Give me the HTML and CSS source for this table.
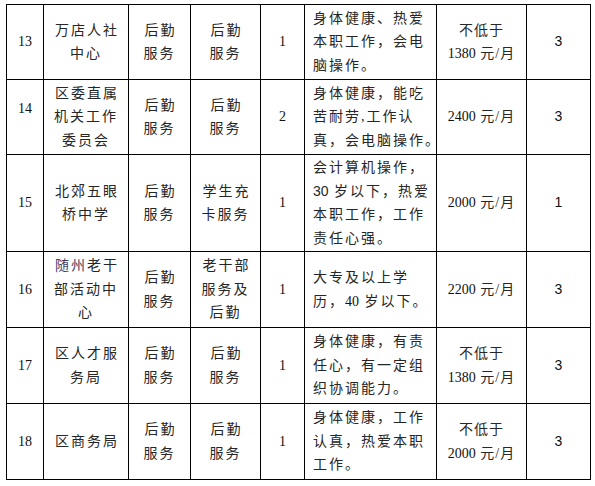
FILE: index.html
```html
<!DOCTYPE html>
<html lang="zh-CN">
<head>
<meta charset="utf-8">
<title>岗位表</title>
<link rel="stylesheet" href="styles.css">
</head>
<body>
<table class="grid">
  <colgroup>
    <col class="c1"><col class="c2"><col class="c3"><col class="c4"><col class="c5"><col class="c6"><col class="c7"><col class="c8">
  </colgroup>
  <tbody>
    <tr class="r75">
      <td class="num">13</td>
      <td class="cj">万店人社<br>中心</td>
      <td class="cj">后勤<br>服务</td>
      <td class="cj">后勤<br>服务</td>
      <td class="num">1</td>
      <td class="req">身体健康、热爱<br>本职工作，会电<br>脑操作。</td>
      <td class="pay">不低于<br><span class="n">1380</span> 元/月</td>
      <td class="cnt">3</td>
    </tr>
    <tr class="r75">
      <td class="num up">14</td>
      <td class="cj">区委直属<br>机关工作<br>委员会</td>
      <td class="cj">后勤<br>服务</td>
      <td class="cj">后勤<br>服务</td>
      <td class="num">2</td>
      <td class="req">身体健康，能吃<br>苦耐劳,工作认<br>真，会电脑操作。</td>
      <td class="pay"><span class="n">2400</span> 元/月</td>
      <td class="cnt">3</td>
    </tr>
    <tr class="r98">
      <td class="num">15</td>
      <td class="cj">北郊五眼<br>桥中学</td>
      <td class="cj">后勤<br>服务</td>
      <td class="cj">学生充<br>卡服务</td>
      <td class="num">1</td>
      <td class="req">会计算机操作，<br><span class="ns">30</span> 岁以下，热爱<br>本职工作，工作<br>责任心强。</td>
      <td class="pay"><span class="n">2000</span> 元/月</td>
      <td class="cnt">1</td>
    </tr>
    <tr class="r76">
      <td class="num">16</td>
      <td class="cj"><span class="place">随州</span>老干<br>部活动中<br>心</td>
      <td class="cj">后勤<br>服务</td>
      <td class="cj">老干部<br>服务及<br>后勤</td>
      <td class="num">1</td>
      <td class="req">大专及以上学<br>历，<span class="n">40</span> 岁以下。</td>
      <td class="pay"><span class="n">2200</span> 元/月</td>
      <td class="cnt">3</td>
    </tr>
    <tr class="r76">
      <td class="num">17</td>
      <td class="cj">区人才服<br>务局</td>
      <td class="cj">后勤<br>服务</td>
      <td class="cj">后勤<br>服务</td>
      <td class="num">1</td>
      <td class="req">身体健康，有责<br>任心，有一定组<br>织协调能力。</td>
      <td class="pay">不低于<br><span class="n">1380</span> 元/月</td>
      <td class="cnt">3</td>
    </tr>
    <tr class="r76">
      <td class="num">18</td>
      <td class="cj">区商务局</td>
      <td class="cj">后勤<br>服务</td>
      <td class="cj">后勤<br>服务</td>
      <td class="num">1</td>
      <td class="req">身体健康，工作<br>认真，热爱本职<br>工作。</td>
      <td class="pay">不低于<br><span class="n">2000</span> 元/月</td>
      <td class="cnt">3</td>
    </tr>
  </tbody>
</table>
</body>
</html>
```
FILE: styles.css
```css
html, body {
  margin: 0;
  padding: 0;
  background: #ffffff;
}

body {
  padding: 4px 0 0 6px;
  font-family: "Liberation Serif", "Noto Sans CJK SC", serif;
  font-size: 14px;
  color: #262626;
}

.grid {
  border-collapse: collapse;
  table-layout: fixed;
  width: 585px;
}

.c1 { width: 37px; }
.c2 { width: 85px; }
.c3 { width: 62px; }
.c4 { width: 70px; }
.c5 { width: 44px; }
.c6 { width: 132px; }
.c7 { width: 90px; }
.c8 { width: 64px; }

.grid td {
  border: 1px solid #000000;
  padding: 0;
  vertical-align: middle;
  text-align: center;
  line-height: 23.5px;
  white-space: nowrap;
  overflow: visible;
}

.r75 { height: 75px; }
.r76 { height: 76px; }
.r98 { height: 97px; }

.cj {
  letter-spacing: 2px;
  text-indent: 2px;
}

.place {
  color: #3a3d66;
}

.num {
  font-size: 14px;
  color: #111111;
}

.up {
  padding-bottom: 16px !important;
}

.req {
  text-align: left !important;
  padding-left: 8px !important;
  letter-spacing: 2px;
}

.pay {
  letter-spacing: 1px;
}

.n {
  letter-spacing: 0;
  color: #111111;
}

.ns {
  font-family: "Liberation Sans", sans-serif;
  letter-spacing: 0;
}

.cnt {
  font-family: "Liberation Sans", "Noto Sans CJK SC", sans-serif;
  font-size: 14px;
  color: #111111;
}
```
